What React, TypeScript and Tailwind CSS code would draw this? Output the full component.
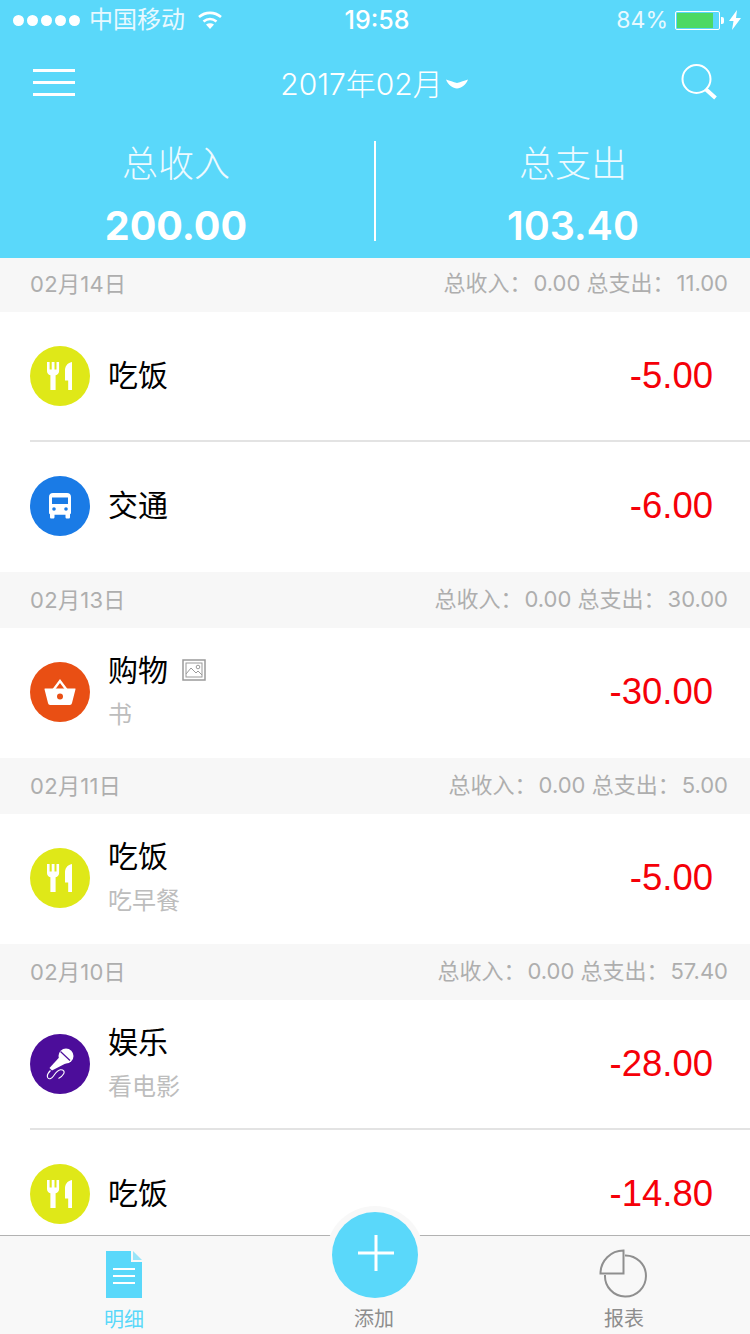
import React from "react";

const FONT = "font-['Inter','Noto_Sans_CJK_SC',sans-serif]";

function Fork() {
  return (
    <svg width="26" height="28" viewBox="0 0 26 28" fill="#fff">
      <path d="M0 0h2.600v7.500h2.100V0h2.800v7.500h2V0h2.600v9c0 2.200-1.400 3.700-3.500 4.300V28H3.400V13.300C1.400 12.700 0 11.200 0 9z" />
      <path d="M25 0v28h-3.800v-9.500H18V8.500C18 4.500 20 1 25 0z" />
    </svg>
  );
}

function Bus() {
  return (
    <svg width="24" height="26" viewBox="0 0 24 26">
      <path fill="#fff" d="M5 0h14c2.500 0 4 1.500 4 4v15.500c0 1-.5 1.500-1 1.700V24c0 1-.6 1.500-1.400 1.500h-1.700c-.8 0-1.400-.5-1.400-1.500v-2.200H6.500V24c0 1-.6 1.500-1.400 1.500H3.400C2.600 25.500 2 25 2 24v-2.800c-.5-.2-1-.7-1-1.700V4c0-2.500 1.500-4 4-4z" />
      <rect x="4" y="4.500" width="16" height="6.500" fill="#1a7be6" />
      <circle cx="6" cy="16" r="1.800" fill="#1a7be6" />
      <circle cx="18" cy="16" r="1.800" fill="#1a7be6" />
    </svg>
  );
}

function Basket() {
  return (
    <svg width="32" height="28" viewBox="0 0 32 28">
      <path fill="#fff" d="M16 1l7.500 10h-3L16 5 11.500 11h-3z" />
      <path fill="#fff" d="M1 10.500h30c.5 0 .6.400.5.800L28 25c-.3 1.200-1 2-2.200 2H6.200C5 27 4.300 26.200 4 25L.500 11.300c-.1-.4 0-.8.500-.8z" />
      <circle cx="16" cy="18.500" r="3" fill="#e94f14" />
    </svg>
  );
}

function Mic() {
  return (
    <svg width="28" height="32" viewBox="0 0 28 32" fill="none">
      <circle cx="20" cy="8" r="7.500" fill="#fff" />
      <path d="M14.500 3.500l9.500 9" stroke="#4c0d9a" strokeWidth="1.200" />
      <path fill="#fff" d="M14 8.500l6.500 6.500L6 22.500 3.500 20z" />
      <path d="M4.500 22.500C2 25 .5 28 2 30c1.500 1.800 3.800.3 5.500-2 2-2.800 4-6 7-6.200 3-.2 4.500 1.800 3 4.200-1 1.700-3 3.700-5 4.500" stroke="#fff" strokeWidth="1.100" />
    </svg>
  );
}

type Kind = "food" | "bus" | "shop" | "fun";
const iconBg: Record<Kind, string> = {
  food: "bg-[#dfe818]",
  bus: "bg-[#1a7be6]",
  shop: "bg-[#e94f14]",
  fun: "bg-[#4c0d9a]",
};

function CatIcon({ kind }: { kind: Kind }) {
  return (
    <div className={`w-[60px] h-[60px] rounded-full flex items-center justify-center shrink-0 ${iconBg[kind]}`}>
      {kind === "food" && <Fork />}
      {kind === "bus" && <Bus />}
      {kind === "shop" && <Basket />}
      {kind === "fun" && <Mic />}
    </div>
  );
}

function DayHeader({ date, income, expense, h }: { date: string; income: string; expense: string; h: string }) {
  return (
    <div className={`${h} bg-[#f7f7f7] flex items-center justify-between pl-[30px] pr-[22px] text-[#aeaeae] text-[22px] leading-none`}>
      <span className="tracking-[0.3px]">{date}</span>
      <span className="-mt-[2px]">
        总收入：<span className="ml-[2px]">{income}</span> 总支出：<span className="ml-[2px]">{expense}</span>
      </span>
    </div>
  );
}

function Row({
  kind,
  title,
  note,
  amount,
  image,
  divider,
  h,
}: {
  kind: Kind;
  title: string;
  note?: string;
  amount: string;
  image?: boolean;
  divider?: boolean;
  h: string;
}) {
  return (
    <div className={`${h} bg-white pl-[30px] flex flex-col`}>
      <div className="flex-1 flex items-center justify-between pr-[37px]">
        <div className="flex items-center gap-[18px]">
          <CatIcon kind={kind} />
          <div className="flex flex-col gap-[16px] -mt-[2px]">
            <div className="flex items-center gap-[14px] text-[30px] leading-[32px] text-black">
              <span>{title}</span>
              {image && (
                <svg width="24" height="22" viewBox="0 0 24 22" fill="none" stroke="#9a9a9a" strokeWidth="1.500">
                  <rect x="1" y="1" width="22" height="20" />
                  <rect x="4" y="4" width="16" height="14" strokeWidth="1" />
                  <path d="M4 15l5-6 5 5 2-2 4 4" strokeWidth="1" />
                  <circle cx="16" cy="8" r="1.800" strokeWidth="1" />
                </svg>
              )}
            </div>
            {note && <div className="text-[24px] leading-[26px] text-[#bdbdbd]">{note}</div>}
          </div>
        </div>
        <span className="font-['Liberation_Sans',sans-serif] text-[36.500px] leading-none text-[#f50008] mt-[1px]">{amount}</span>
      </div>
      <div className={divider ? "h-[2px] bg-[#e3e3e3]" : "h-[2px]"} />
    </div>
  );
}

function Summary({ label, value, bold, pad }: { label: string; value: string; bold: string; pad: string }) {
  return (
    <div className={`w-[374px] flex flex-col items-center text-white pt-[3px] ${pad}`}>
      <div className="text-[36px] leading-[40px] font-light text-[#eefaff]">{label}</div>
      <div className={`text-[39.500px] leading-[44px] mt-[20px] ${bold}`}>{value}</div>
    </div>
  );
}

export default function App() {
  return (
    <div className={`relative w-[750px] h-[1334px] overflow-hidden flex flex-col bg-white ${FONT}`}>
      <div className="h-[258px] shrink-0 bg-[#5ad8fa] text-white flex flex-col">
        {/* status bar */}
        <div className="h-[40px] flex items-center justify-between pl-[13px] pr-[9px] text-[24px] leading-none">
          <div className="flex items-center flex-1">
            <div className="flex gap-[3px]">
              {[0, 1, 2, 3, 4].map((i) => (
                <div key={i} className="w-[11px] h-[11px] rounded-full bg-white" />
              ))}
            </div>
            <span className="ml-[9px] text-[#e8f9ff]">中国移动</span>
            <svg className="ml-[12px]" width="26" height="20" viewBox="0 0 26 20" fill="none" stroke="#fff" strokeWidth="2.600">
              <path d="M2 7c6.500-5.500 15.500-5.500 22 0" />
              <path d="M6.500 11.500c4-3.300 9-3.300 13 0" />
              <path fill="#fff" stroke="none" d="M9 14.500c2.500-1.800 5.500-1.800 8 0L13 19z" />
            </svg>
          </div>
          <span className="font-medium text-[25px]">19:58</span>
          <div className="flex-1 flex items-center justify-end">
            <span className="text-[#e8f9ff] text-[23px]">84%</span>
            <div className="ml-[7px] w-[45px] h-[19px] border border-white rounded-[2px] p-[1px]">
              <div className="w-[36px] h-full bg-[#4cd964]" />
            </div>
            <div className="ml-[1px] w-[3px] h-[7px] bg-white rounded-r-[2px]" />
            <svg className="ml-[5px]" width="12" height="20" viewBox="0 0 12 20" fill="#fff">
              <path d="M8 0L0 11h4.500L3 20l9-12H7z" />
            </svg>
          </div>
        </div>
        {/* nav */}
        <div className="h-[84px] flex items-center justify-between pl-[33px] pr-[32px]">
          <div className="flex flex-col gap-[9px] w-[42px]">
            <div className="h-[3px] bg-white" />
            <div className="h-[3px] bg-white" />
            <div className="h-[3px] bg-white" />
          </div>
          <div className="flex items-center text-[30px] leading-none font-light mr-[8px] pt-[4px]">
            <span>2017年02月</span>
            <svg className="ml-[3px]" width="22" height="10" viewBox="0 0 22 10" fill="#fff">
              <path d="M0 .5C4 2 7 2.800 11 4c4-1.200 7-2 11-3.500C20 6 15 9.500 11 9.500 7 9.500 2 6 0 .5z" />
            </svg>
          </div>
          <svg width="37" height="36" viewBox="0 0 37 36" fill="none" stroke="#fff">
            <circle cx="15.500" cy="15" r="14" strokeWidth="2" />
            <path d="M24.500 25l10 9" strokeWidth="4" />
          </svg>
        </div>
        {/* totals */}
        <div className="flex items-start pt-[17px]">
          <Summary label="总收入" value="200.00" bold="font-bold" pad="pr-[22px]" />
          <div className="w-[2px] h-[100px] bg-white" />
          <Summary label="总支出" value="103.40" bold="font-semibold" pad="pl-[20px]" />
        </div>
      </div>

      <div className="flex-1 min-h-0 overflow-hidden">
        <DayHeader h="h-[54px] pb-[2px]" date="02月14日" income="0.00" expense="11.00" />
        <Row h="h-[130px]" kind="food" title="吃饭" amount="-5.00" divider />
        <Row h="h-[130px]" kind="bus" title="交通" amount="-6.00" />
        <DayHeader h="h-[56px]" date="02月13日" income="0.00" expense="30.00" />
        <Row h="h-[130px]" kind="shop" title="购物" note="书" amount="-30.00" image />
        <DayHeader h="h-[56px]" date="02月11日" income="0.00" expense="5.00" />
        <Row h="h-[130px]" kind="food" title="吃饭" note="吃早餐" amount="-5.00" />
        <DayHeader h="h-[56px]" date="02月10日" income="0.00" expense="57.40" />
        <Row h="h-[130px]" kind="fun" title="娱乐" note="看电影" amount="-28.00" divider />
        <Row h="h-[130px]" kind="food" title="吃饭" amount="-14.80" />
      </div>

      {/* tab bar */}
      <div className="relative h-[99px] shrink-0 bg-[#f8f8f8] border-t border-[#b2b2b2] flex">
        <div className="w-[248px] flex flex-col items-center">
          <svg className="mt-[15px]" width="36" height="47" viewBox="0 0 36 47">
            <path fill="#5ad8fa" d="M0 0h25v11h11v36H0z" />
            <path fill="#5ad8fa" opacity="0.6" d="M27 0l9 9h-9z" />
            <path stroke="#fff" strokeWidth="2" d="M7 18h22M7 25h22M7 32h22" />
          </svg>
          <span className="mt-[10px] text-[20px] leading-[24px] text-[#5ad8fa]">明细</span>
        </div>
        <div className="w-[252px] flex flex-col items-center justify-end pb-[3px]">
          <span className="text-[20px] leading-[24px] text-[#8d8d8d]">添加</span>
        </div>
        <div className="w-[250px] pr-[2px] flex flex-col items-center">
          <svg className="mt-[13px]" width="50" height="50" viewBox="0 0 50 50" fill="none" stroke="#8f8f8f" strokeWidth="2">
            <path d="M26 6.500A20.500 20.500 0 1 1 6 26" />
            <path d="M24.500 1.500V24.500H1.500A23 23 0 0 1 24.500 1.500z" />
          </svg>
          <span className="mt-[8px] text-[20px] leading-[24px] text-[#8d8d8d]">报表</span>
        </div>
        <div className="absolute left-[326px] -top-[30px] w-[98px] h-[98px] rounded-full bg-[#f8f8f8] flex items-center justify-center">
          <div className="w-[86px] h-[86px] rounded-full bg-[#5ad8fa] flex items-center justify-center">
            <svg className="mb-[4px] ml-[2px]" width="36" height="36" viewBox="0 0 36 36" stroke="#fff" strokeWidth="3">
              <path d="M18 0v36M0 18h36" />
            </svg>
          </div>
        </div>
      </div>
    </div>
  );
}
